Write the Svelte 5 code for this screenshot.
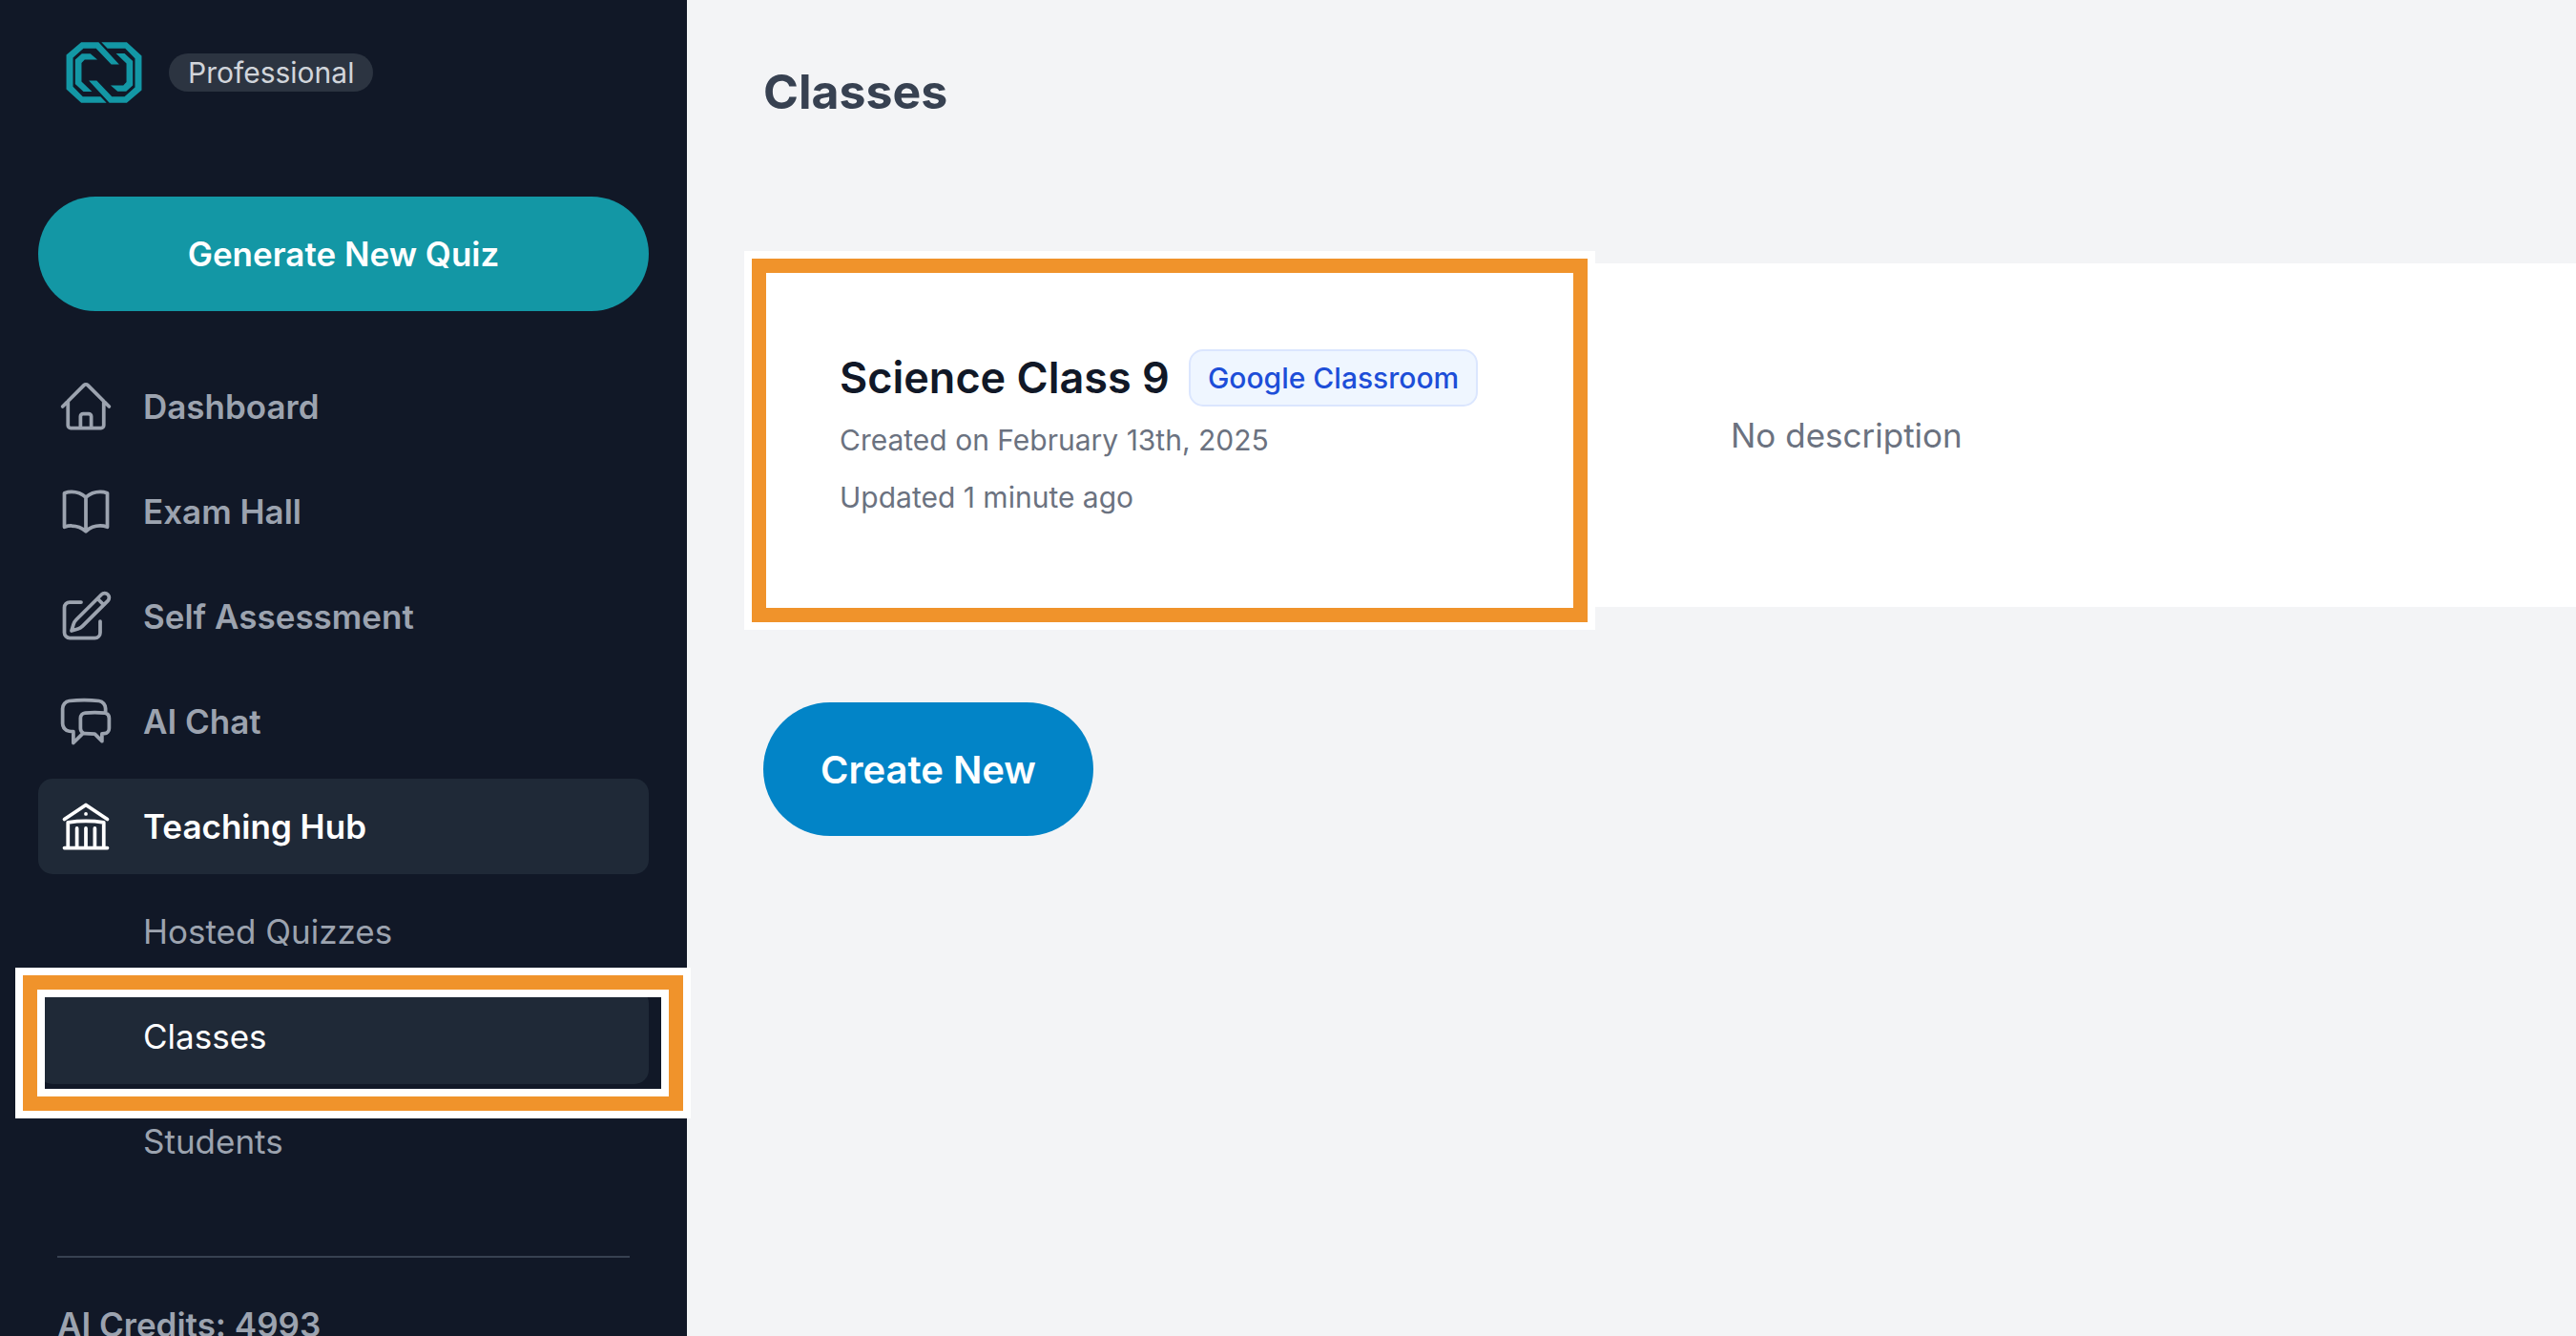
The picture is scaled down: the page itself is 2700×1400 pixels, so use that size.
<script lang="ts">
  interface NavItem {
    label: string;
    icon: string;
    active?: boolean;
  }

  interface SubItem {
    label: string;
    active?: boolean;
  }

  interface ClassRow {
    name: string;
    source: string;
    created: string;
    updated: string;
    description: string;
  }

  const navItems: NavItem[] = [
    {
      label: 'Dashboard',
      icon: 'm2.25 12 8.954-8.955c.44-.439 1.152-.439 1.591 0L21.75 12M4.5 9.75v10.125c0 .621.504 1.125 1.125 1.125H9.75v-4.875c0-.621.504-1.125 1.125-1.125h2.25c.621 0 1.125.504 1.125 1.125V21h4.125c.621 0 1.125-.504 1.125-1.125V9.75M8.25 21h8.25'
    },
    {
      label: 'Exam Hall',
      icon: 'M12 6.042A8.967 8.967 0 0 0 6 3.75c-1.052 0-2.062.18-3 .512v14.25A8.987 8.987 0 0 1 6 18c2.305 0 4.408.867 6 2.292m0-14.25a8.966 8.966 0 0 1 6-2.292c1.052 0 2.062.18 3 .512v14.25A8.987 8.987 0 0 0 18 18a8.967 8.967 0 0 0-6 2.292m0-14.25v14.25'
    },
    {
      label: 'Self Assessment',
      icon: 'm16.862 4.487 1.687-1.688a1.875 1.875 0 1 1 2.652 2.652L10.582 16.07a4.5 4.5 0 0 1-1.897 1.13L6 18l.8-2.685a4.5 4.5 0 0 1 1.13-1.897l8.932-8.931Zm0 0L19.5 7.125M18 14v4.75A2.25 2.25 0 0 1 15.75 21H5.25A2.25 2.25 0 0 1 3 18.75V8.25A2.25 2.25 0 0 1 5.25 6H10'
    },
    {
      label: 'AI Chat',
      icon: 'M20.25 8.511c.884.284 1.5 1.128 1.5 2.097v4.286c0 1.136-.847 2.1-1.98 2.193-.34.027-.68.052-1.02.072v3.091l-3-3c-1.354 0-2.694-.055-4.02-.163a2.115 2.115 0 0 1-.825-.242m9.345-8.334a2.126 2.126 0 0 0-.476-.095 48.64 48.64 0 0 0-8.048 0c-1.131.094-1.976 1.057-1.976 2.192v4.286c0 .837.46 1.58 1.155 1.951m9.345-8.334V6.637c0-1.621-1.152-3.026-2.76-3.235A48.455 48.455 0 0 0 11.25 3c-2.115 0-4.198.137-6.24.402-1.608.209-2.76 1.614-2.76 3.235v6.226c0 1.621 1.152 3.026 2.76 3.235.577.075 1.157.14 1.74.194V21l4.155-4.155'
    },
    {
      label: 'Teaching Hub',
      icon: 'M12 21v-8.25M15.75 21v-8.25M8.25 21v-8.25M3 9l9-6 9 6m-1.5 12V10.332A48.36 48.36 0 0 0 12 9.75c-2.551 0-5.056.2-7.5.582V21M3 21h18M12 6.75h.008v.008H12V6.75Z',
      active: true
    }
  ];

  const subItems: SubItem[] = [
    { label: 'Hosted Quizzes' },
    { label: 'Classes', active: true },
    { label: 'Students' }
  ];

  const classes: ClassRow[] = [
    {
      name: 'Science Class 9',
      source: 'Google Classroom',
      created: 'Created on February 13th, 2025',
      updated: 'Updated 1 minute ago',
      description: 'No description'
    }
  ];

  const credits = 4993;
</script>

<div class="app">
  <aside class="sidebar">
    <div class="brand">
      <svg class="logo" viewBox="58 41 238 193" aria-hidden="true">
        <path d="M105 42H160L225 112H200L152 61H112L79 91V182L110 214H166L185 233H105L58 190V82Z" />
        <path d="M249 233H194L129 163H154L202 214H242L275 184V93L244 61H188L169 42H249L296 85V193Z" />
        <path d="M107 78H134L156 97H116L106 107V166L139 198H112L86 174V97Z" />
        <path d="M247 197H220L198 178H238L248 168V109L215 77H242L268 101V178Z" />
      </svg>
      <span class="plan">Professional</span>
    </div>

    <button class="generate" type="button">Generate New Quiz</button>

    <nav class="nav">
      {#each navItems as item}
        <a class="nav-item" class:active={item.active} href="#top">
          <svg class="icon" viewBox="0 0 24 24" aria-hidden="true">
            <path d={item.icon} />
          </svg>
          {item.label}
        </a>
      {/each}
      {#each subItems as item}
        <a class="nav-item sub" class:active={item.active} href="#top">
          {item.label}
          {#if item.active}
            <span class="marker"></span>
          {/if}
        </a>
      {/each}
    </nav>

    <div class="credits">AI Credits: {credits}</div>
  </aside>

  <main class="content">
    <h1>Classes</h1>

    <table>
      <tbody>
        {#each classes as row}
          <tr>
            <td class="class-cell">
              <div class="class-info">
                <div class="class-title">
                  <h2>{row.name}</h2>
                  <span class="source">{row.source}</span>
                </div>
                <p>{row.created}</p>
                <p>{row.updated}</p>
                <span class="marker"></span>
              </div>
            </td>
            <td class="description">{row.description}</td>
          </tr>
        {/each}
      </tbody>
    </table>

    <button class="create" type="button">Create New</button>
  </main>
</div>

<style>
  :global(body) {
    margin: 0;
    background: #f3f4f6;
  }

  .app {
    display: flex;
    height: 100vh;
    overflow: hidden;
    font-family: Inter, 'Liberation Sans', sans-serif;
  }

  .sidebar {
    position: relative;
    z-index: 1;
    flex: none;
    box-sizing: border-box;
    width: 720px;
    padding: 44px 40px 0;
    background: #111827;
  }

  .brand {
    display: flex;
    align-items: center;
    gap: 28px;
    padding-left: 29px;
  }

  .logo {
    width: 80px;
    height: 64px;
    fill: #1397a5;
  }

  .plan {
    padding: 0 20px;
    border-radius: 20px;
    background: #2c3441;
    color: #d1d5db;
    font-size: 30px;
    line-height: 40px;
  }

  button {
    border: 0;
    color: #fff;
    font-family: inherit;
    font-weight: 600;
    cursor: pointer;
  }

  .generate {
    width: 100%;
    height: 120px;
    margin: 98px 0 50px;
    border-radius: 60px;
    background: #1397a5;
    font-size: 35px;
  }

  .nav {
    display: flex;
    flex-direction: column;
    gap: 10px;
  }

  .nav-item {
    position: relative;
    display: flex;
    align-items: center;
    gap: 30px;
    height: 100px;
    padding-left: 20px;
    border-radius: 15px;
    color: #9ca3af;
    font-size: 35px;
    font-weight: 600;
    text-decoration: none;
  }

  .nav-item.sub {
    padding-left: 110px;
    font-weight: 400;
  }

  .nav-item.active {
    background: #1f2937;
    color: #fff;
  }

  .icon {
    width: 60px;
    height: 60px;
    fill: none;
    stroke: currentColor;
    stroke-width: 1.5;
    stroke-linecap: round;
    stroke-linejoin: round;
  }

  .credits {
    margin: 70px 20px 0;
    padding-top: 45px;
    border-top: 2px solid #374151;
    color: #9ca3af;
    font-size: 35px;
    font-weight: 600;
    line-height: 50px;
  }

  /* orange frame with a white edge on both sides */
  .marker {
    position: absolute;
    border: 15px solid #f0932b;
    box-shadow:
      0 0 0 8px #fff,
      inset 0 0 0 8px #fff;
    pointer-events: none;
  }

  .nav-item .marker {
    inset: -14px -36px -28px -16px;
  }

  .class-info .marker {
    inset: -5px 106px -16px -12px;
  }

  .content {
    flex: 1;
    min-width: 0;
    padding: 66px 0 0 80px;
  }

  h1 {
    margin: 0 0 150px;
    color: #374151;
    font-size: 50px;
    font-weight: 700;
    line-height: 60px;
  }

  table {
    width: 100%;
    border-collapse: collapse;
    background: #fff;
  }

  td {
    padding: 0;
  }

  .class-cell {
    width: 970px;
  }

  .class-info {
    position: relative;
    padding: 90px 80px 85px;
  }

  .class-title {
    display: flex;
    align-items: center;
    gap: 20px;
    margin-bottom: 5px;
  }

  h2 {
    margin: 0;
    color: #111827;
    font-size: 45px;
    font-weight: 600;
    line-height: 60px;
  }

  .source {
    box-sizing: border-box;
    height: 60px;
    padding: 0 18px;
    border: 2px solid #dbe6fe;
    border-radius: 15px;
    background: #eff6ff;
    color: #1d4ed8;
    font-size: 30px;
    font-weight: 500;
    line-height: 56px;
  }

  p {
    margin: 0;
    color: #6b7280;
    font-size: 30px;
    line-height: 60px;
  }

  .description {
    padding-left: 44px;
    color: #6b7280;
    font-size: 35px;
  }

  .create {
    height: 140px;
    margin-top: 100px;
    padding: 0 60px;
    border-radius: 70px;
    background: #0284c7;
    font-size: 40px;
  }
</style>
